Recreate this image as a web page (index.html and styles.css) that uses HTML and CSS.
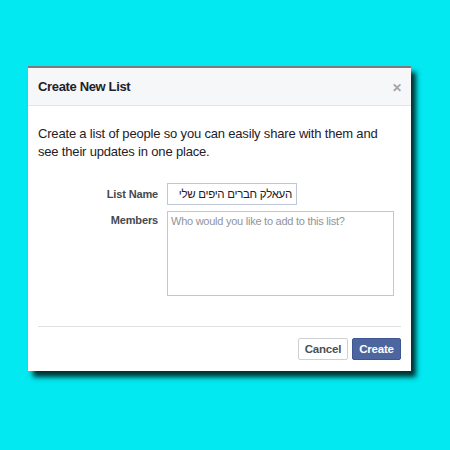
FILE: index.html
```html
<!DOCTYPE html>
<html>
<head>
<meta charset="utf-8">
<link rel="stylesheet" href="styles.css">
</head>
<body>
<div class="dialog">
  <div class="header">
    <span class="title">Create New List</span>
    <span class="close">&#x2715;</span>
  </div>
  <div class="body">
    <p class="intro">Create a list of people so you can easily share with them and see their updates in one place.</p>
    <div class="form">
      <label class="label label-name">List Name</label>
      <div class="input" dir="rtl">העאלק חברים היפים שלי</div>
      <label class="label label-members">Members</label>
      <div class="textarea">Who would you like to add to this list?</div>
    </div>
  </div>
  <div class="footer">
    <button class="btn cancel">Cancel</button>
    <button class="btn create">Create</button>
  </div>
</div>
</body>
</html>
```
FILE: styles.css
```css
html, body {
  margin: 0;
  padding: 0;
  background: #02e9f1;
  width: 450px;
  height: 450px;
  overflow: hidden;
  font-family: "Liberation Sans", Arial, sans-serif;
}
.dialog {
  margin: 66px 0 0 28px;
  width: 383px;
  background: #fff;
  border-top: 2px solid #7b7b7b;
  box-shadow: 5px 6px 5px rgba(0, 30, 30, 0.9);
}
.header {
  height: 37px;
  background: #f6f7f9;
  border-bottom: 1px solid #e5e5e5;
  display: flex;
  align-items: center;
  justify-content: space-between;
  padding: 0 10px;
}
.title {
  font-size: 13px;
  letter-spacing: -0.35px;
  font-weight: bold;
  color: #1d2129;
}
.close {
  font-size: 12px;
  color: #a0a3a8;
  font-weight: bold;
  margin-right: -1px;
  margin-top: 2px;
}
.body {
  padding: 0 10px;
}
.intro {
  margin: 0;
  padding-top: 19px;
  font-size: 13px;
  letter-spacing: -0.18px;
  line-height: 18px;
  color: #1d2129;
}
.form {
  display: grid;
  grid-template-columns: 120px 1fr;
  column-gap: 9px;
  row-gap: 6px;
  margin-top: 22px;
  padding-bottom: 30px;
  border-bottom: 1px solid #dddfe2;
}
.label {
  text-align: right;
  font-size: 11px;
  letter-spacing: -0.15px;
  font-weight: bold;
  color: #444950;
}
.label-name {
  line-height: 22px;
}
.label-members {
  padding-top: 3px;
}
.input {
  height: 20px;
  border: 1px solid #bdc7d8;
  font-size: 11.5px;
  letter-spacing: -0.3px;
  line-height: 20px;
  padding: 0 4px 0 0;
  color: #1d2129;
  text-align: right;
  white-space: nowrap;
  overflow: hidden;
  justify-self: start;
  box-sizing: content-box;
  width: 124px;
}
.textarea {
  width: 219px;
  height: 77px;
  border: 1px solid #bdc7d8;
  padding: 3px 3px;
  font-size: 11px;
  letter-spacing: -0.25px;
  color: #90949c;
}
.footer {
  display: flex;
  justify-content: flex-end;
  gap: 4px;
  padding: 11px 10px 11px;
}
.btn {
  height: 22px;
  font-family: "Liberation Sans", Arial, sans-serif;
  font-size: 11.5px;
  letter-spacing: -0.2px;
  font-weight: bold;
  padding: 0 4px;
  border-radius: 2px;
  line-height: 20px;
}
.cancel {
  background: #fff;
  border: 1px solid #ced0d4;
  color: #4b4f56;
  width: 50px;
}
.create {
  background: #4d66a0;
  border: 1px solid #3f5791;
  color: #fff;
  width: 49px;
}
```
